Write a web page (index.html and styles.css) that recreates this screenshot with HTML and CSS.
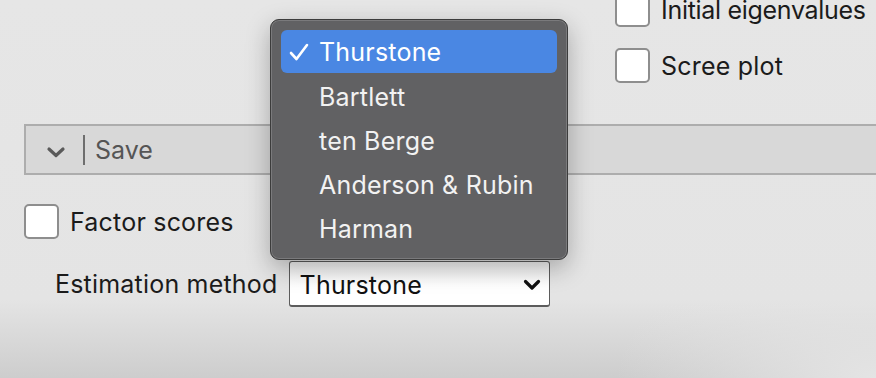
FILE: index.html
```html
<!DOCTYPE html>
<html lang="en">
<head>
  <meta charset="UTF-8">
  <title>Factor analysis options</title>
  <link rel="stylesheet" href="styles.css">
</head>
<body>
  <div class="panel">
    <div class="top-options">
      <div class="check tight"><span class="box"></span>Initial eigenvalues</div>
      <div class="check"><span class="box"></span>Scree plot</div>
    </div>

    <div class="section-bar">
      <svg class="chevron" width="20" height="12" viewBox="0 0 20 12">
        <path d="M3 3 L10 9.5 L17 3" fill="none" stroke="#5a5a5a" stroke-width="3.2" stroke-linecap="round" stroke-linejoin="round"/>
      </svg>
      <span class="divider"></span>
      <span class="section-title">Save</span>
    </div>

    <div class="section-body">
      <div class="check"><span class="box"></span>Factor scores</div>
      <div class="field-row">
        <span class="field-label">Estimation method</span>
        <div class="select">
          <span>Thurstone</span>
          <svg width="18" height="12" viewBox="0 0 18 12">
            <path d="M2.5 2.5 L9 9 L15.5 2.5" fill="none" stroke="#111" stroke-width="3.2" stroke-linecap="round" stroke-linejoin="round"/>
          </svg>
        </div>
      </div>
    </div>
  </div>

  <div class="menu">
    <div class="menu-item selected">
      <svg class="tick" width="20" height="18" viewBox="0 0 20 18">
        <path d="M2 10 L7.5 16 L18 2" fill="none" stroke="#fff" stroke-width="2.6" stroke-linecap="round" stroke-linejoin="round"/>
      </svg>
      Thurstone
    </div>
    <div class="menu-item">Bartlett</div>
    <div class="menu-item">ten Berge</div>
    <div class="menu-item">Anderson &amp; Rubin</div>
    <div class="menu-item">Harman</div>
  </div>
</body>
</html>
```

FILE: styles.css
```css
html, body {
  margin: 0;
  height: 100%;
  overflow: hidden;
}
body {
  font-family: Inter, "Liberation Sans", sans-serif;
  font-size: 25px;
  letter-spacing: 0.2px;
  color: #1b1b1b;
  background:
    radial-gradient(ellipse 260px 140px at 100% 100%, #e4e4e4 0%, rgba(228,228,228,0) 100%),
    linear-gradient(to bottom, #e6e6e6 0px, #e4e4e4 300px, #cdcdcd 378px);
  position: relative;
}
.top-options {
  margin-top: -8px;
  padding-left: 615px;
  display: flex;
  flex-direction: column;
  gap: 21px;
}
.check {
  display: flex;
  align-items: center;
  gap: 11px;
  height: 35px;
  white-space: nowrap;
}
.check.tight {
  letter-spacing: -0.3px;
}
.box {
  width: 31px;
  height: 31px;
  flex: none;
  background: #fff;
  border: 2px solid #8e8e8e;
  border-radius: 5px;
}
.section-bar {
  margin-top: 41px;
  margin-left: 24px;
  margin-right: -10px;
  height: 47px;
  background: #d8d8d8;
  border: 2px solid #adadad;
  display: flex;
  align-items: center;
  color: #555;
}
.chevron {
  margin-left: 20px;
  margin-top: 4px;
}
.divider {
  width: 2px;
  height: 30px;
  background: #6e6e6e;
  margin-left: 17px;
  margin-right: 10px;
}
.section-title {
  letter-spacing: 0;
}
.section-body {
  padding-left: 24px;
  margin-top: 29px;
}
.field-row {
  display: flex;
  align-items: center;
  margin-top: 22px;
  padding-left: 31px;
  gap: 11px;
}
.select {
  width: 261px;
  height: 46px;
  box-sizing: border-box;
  background: linear-gradient(to bottom, #f2f2f2, #ffffff 60%);
  border: 1px solid #5c5c5c;
  border-bottom-width: 2px;
  border-radius: 3px;
  display: flex;
  align-items: center;
  justify-content: space-between;
  padding: 2px 8px 0 10px;
  color: #111;
}
.menu {
  position: absolute;
  left: 270px;
  top: 19px;
  width: 296px;
  height: 239px;
  background: #616163;
  border: 1px solid #3c3c3c;
  border-radius: 9px;
  box-shadow: inset 0 0 0 1px #7a7a7c, 0 8px 24px rgba(0,0,0,0.28);
}
.menu-item {
  height: 44px;
  margin: 0 10px;
  padding-left: 38px;
  display: flex;
  align-items: center;
  color: #f2f2f2;
  position: relative;
}
.menu-item.selected {
  margin-top: 10px;
  margin-bottom: 2px;
  height: 43px;
  background: #4a87e3;
  border-radius: 6px;
  color: #fff;
}
.tick {
  position: absolute;
  left: 8px;
  top: 13px;
}
```
